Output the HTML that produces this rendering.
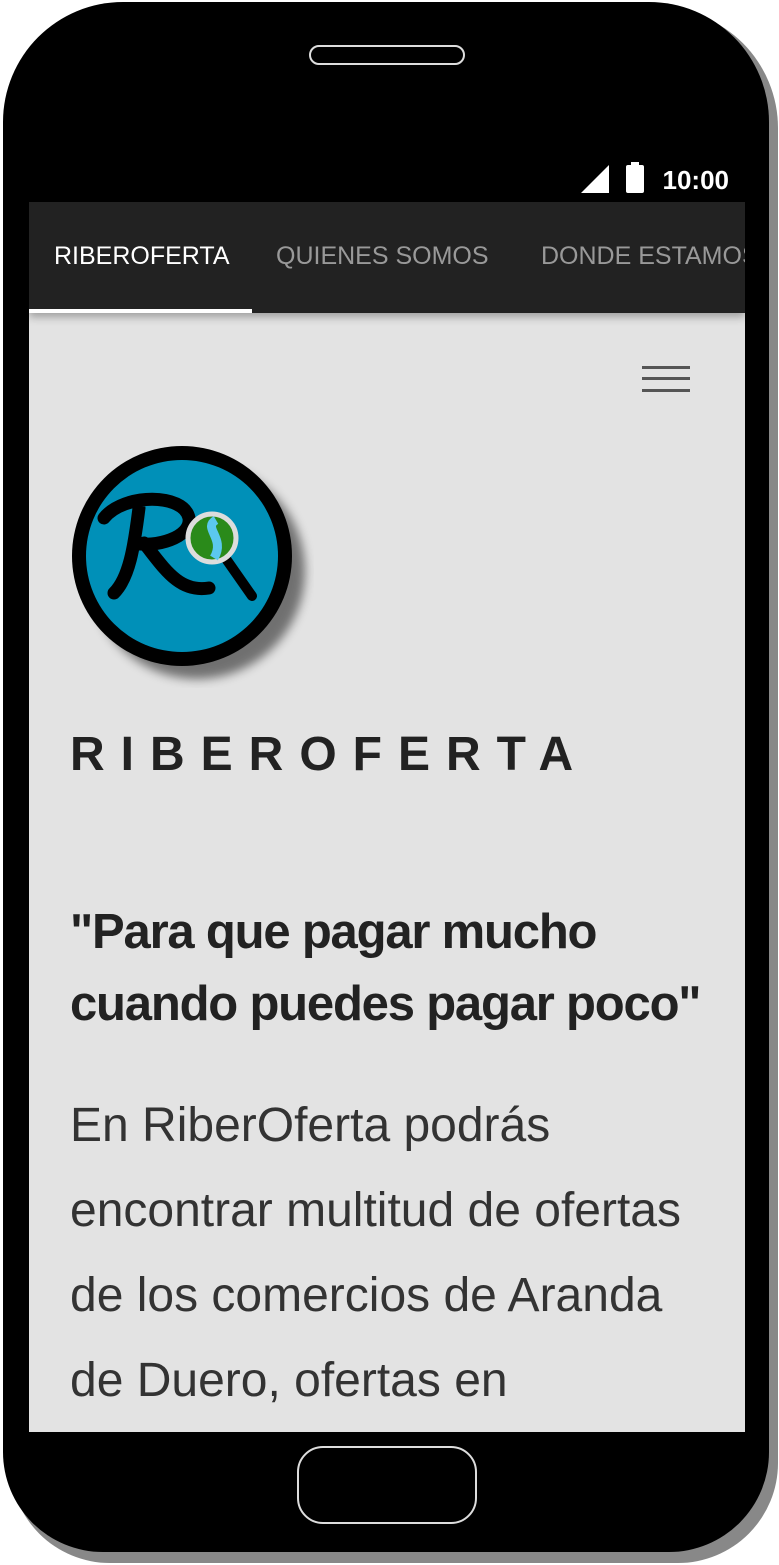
<!DOCTYPE html>
<html><head><meta charset="utf-8"><style>
*{margin:0;padding:0;box-sizing:border-box}
body{width:779px;height:1565px;background:#fff;position:relative;overflow:hidden;font-family:"Liberation Sans",sans-serif}
.shadow{position:absolute;left:10px;top:8px;width:768px;height:1555px;background:#888;border-radius:120px 120px 100px 100px}
.phone{position:absolute;left:3px;top:2px;width:766px;height:1550px;background:#000;border-radius:120px 120px 100px 100px}
.speaker{position:absolute;left:306px;top:43px;width:156px;height:20px;border:2px solid #ddd;border-radius:10px}
.home{position:absolute;left:294px;top:1444px;width:180px;height:78px;border:2px solid #ddd;border-radius:26px}
.screen{position:absolute;left:29px;top:153px;width:716px;height:1279px;background:#e3e3e3;overflow:hidden}
.status{height:49px;background:#000;position:relative;color:#fff}
.time{position:absolute;right:16px;top:12px;font-size:26px;font-weight:bold}
.tabs{height:111px;background:#222;position:relative;box-shadow:0 4px 8px rgba(0,0,0,.3);white-space:nowrap}
.tab{position:absolute;top:40px;font-size:25px;color:#999}
.ind{position:absolute;left:0;bottom:0;width:223px;height:4px;background:#fff}
.ham{position:absolute;left:613px;width:48px;height:3px;background:#555}
h1{position:absolute;left:41px;top:574px;font-size:48px;letter-spacing:16px;font-weight:bold;color:#222}
h2{position:absolute;left:41px;top:743px;font-size:49px;line-height:72px;font-weight:bold;color:#222;letter-spacing:-1.2px;white-space:nowrap}
p{position:absolute;left:41px;top:930px;font-size:48px;line-height:85px;color:#333;white-space:nowrap}
</style></head><body>
<div class="shadow"></div>
<div class="phone"><div class="speaker"></div><div class="home"></div></div>
<div class="screen">
 <div class="status">
  <svg style="position:absolute;left:552px;top:12px" width="28" height="28"><polygon points="28,0 28,28 0,28" fill="#fff"/></svg>
  <div style="position:absolute;left:597px;top:12px;width:18px;height:28px;background:#fff;border-radius:2px"></div>
  <div style="position:absolute;left:602px;top:9px;width:8px;height:4px;background:#fff"></div>
  <span class="time">10:00</span>
 </div>
 <div class="tabs">
  <span class="tab" style="left:25px;color:#fff">RIBEROFERTA</span>
  <span class="tab" style="left:247px">QUIENES SOMOS</span>
  <span class="tab" style="left:512px">DONDE ESTAMOS</span>
  <div class="ind"></div>
 </div>
 <div class="ham" style="top:213px"></div><div class="ham" style="top:224px"></div><div class="ham" style="top:236px"></div>
 <svg style="position:absolute;left:35px;top:285px" width="250" height="250">
  <defs><filter id="f"><feGaussianBlur stdDeviation="5"/></filter></defs>
  <circle cx="125" cy="125" r="108" fill="#000" opacity=".5" filter="url(#f)" transform="translate(8,8)"/>
  <circle cx="118" cy="118" r="110" fill="#000"/>
  <circle cx="118" cy="118" r="96" fill="#0090b8"/>
  <path d="M40 80 C60 55 120 55 125 80 C128 100 90 110 70 105 M75 70 C70 110 65 140 50 155 M80 105 C100 130 115 155 145 150" stroke="#000" stroke-width="13" fill="none" stroke-linecap="round"/>
  <line x1="160" y1="118" x2="188" y2="158" stroke="#000" stroke-width="10" stroke-linecap="round"/>
  <circle cx="148" cy="100" r="24" fill="#2a8a1a" stroke="#ddd" stroke-width="5"/>
  <path d="M152 82 C138 90 162 100 150 120" stroke="#5bc8ee" stroke-width="9" fill="none"/>
 </svg>
 <h1>RIBEROFERTA</h1>
 <h2>"Para que pagar mucho<br>cuando puedes pagar poco"</h2>
 <p>En RiberOferta podrás<br>encontrar multitud de ofertas<br>de los comercios de Aranda<br>de Duero, ofertas en</p>
</div>
</body></html>
